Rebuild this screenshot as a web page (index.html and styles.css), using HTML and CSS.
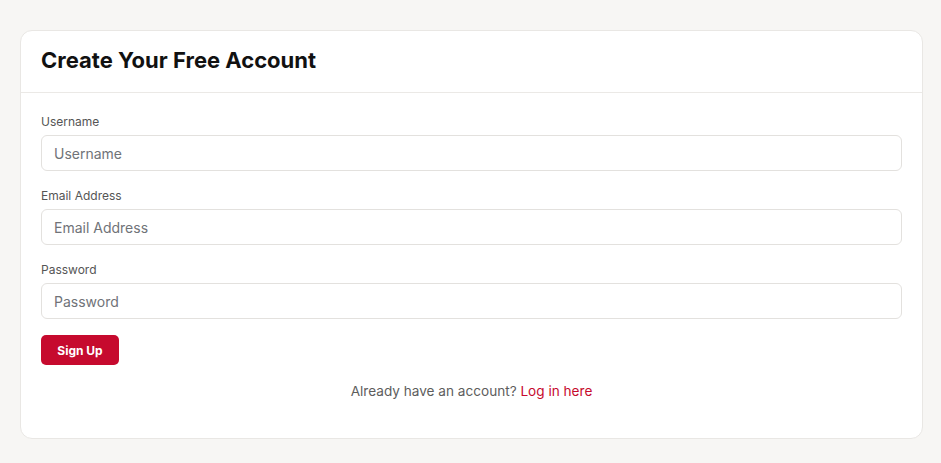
FILE: index.html
```html
<!DOCTYPE html>
<html lang="en">
<head>
<meta charset="utf-8">
<title>Create Your Free Account</title>
<link rel="stylesheet" href="styles.css">
</head>
<body>
<div class="page">
  <div class="card">
    <div class="card-header">
      <h1 class="title">Create Your Free Account</h1>
    </div>
    <div class="card-body">
      <form class="form">
        <div class="field">
          <label class="label" for="username">Username</label>
          <input class="input" id="username" type="text" placeholder="Username">
        </div>
        <div class="field">
          <label class="label" for="email">Email Address</label>
          <input class="input" id="email" type="email" placeholder="Email Address">
        </div>
        <div class="field">
          <label class="label" for="password">Password</label>
          <input class="input" id="password" type="password" placeholder="Password">
        </div>
        <button class="btn" type="button">Sign Up</button>
      </form>
      <p class="footer-text">Already have an account? <a class="link" href="#">Log in here</a></p>
    </div>
  </div>
</div>
</body>
</html>
```
FILE: styles.css
```css
* { box-sizing: border-box; }
html, body { margin: 0; padding: 0; }
body {
  background: #f7f6f4;
  font-family: "Inter", "Noto Sans", sans-serif;
  color: #222;
}
.page {
  padding: 30px 18px 25px 20px;
}
.card {
  background: #fff;
  border: 1px solid #e9e7e4;
  border-radius: 12px;
}
.card-header {
  height: 62px;
  display: flex;
  align-items: center;
  padding: 0 20px 3px;
  border-bottom: 1px solid #ebe9e6;
}
.title {
  margin: 0;
  font-size: 22px;
  font-weight: 700;
  color: #111;
  letter-spacing: 0;
}
.card-body {
  padding: 19px 20px 36px;
}
.form {
  display: flex;
  flex-direction: column;
  align-items: flex-start;
}
.field {
  width: 100%;
  display: flex;
  flex-direction: column;
  margin-bottom: 15px;
}
.field:last-of-type { margin-bottom: 16px; }
.label {
  font-size: 12px;
  line-height: 20px;
  color: #555;
  font-weight: 400;
  margin-bottom: 3px;
}
.input {
  height: 36px;
  width: 100%;
  border: 1px solid #e3e1de;
  border-radius: 6px;
  padding: 0 12px;
  font-family: inherit;
  font-size: 14px;
  color: #333;
  background: #fff;
}
.input::placeholder { color: #707378; }
.btn {
  height: 30px;
  width: 78px;
  border: none;
  border-radius: 5px;
  background: #c60a2e;
  color: #fff;
  font-family: inherit;
  font-weight: 700;
  font-size: 12px;
  padding: 0;
}
.footer-text {
  margin: 15px 0 0;
  text-align: center;
  font-size: 13.6px;
  line-height: 22px;
  color: #5d5d5d;
}
.link {
  color: #c60a2e;
  text-decoration: none;
}
```
